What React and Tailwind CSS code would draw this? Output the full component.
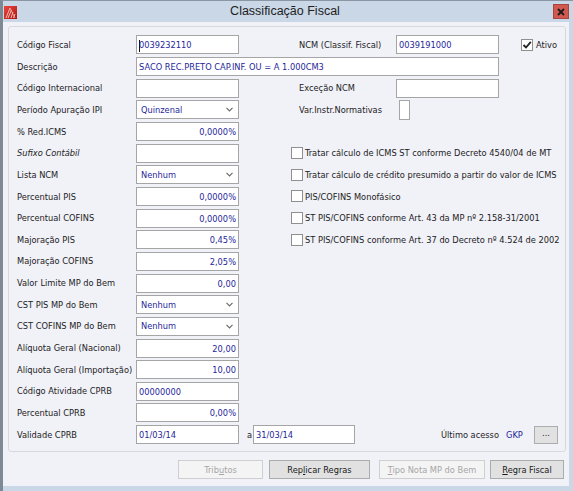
import React from 'react';

const FONT = { fontFamily: '"DejaVu Sans Condensed", "Liberation Sans", Arial, sans-serif', fontStretch: 'condensed' };

function Row({ children }) {
  return <div className="flex h-[21.67px] shrink-0 items-center">{children}</div>;
}

function Label({ children, italic }) {
  return (
    <div className={`w-[119px] shrink-0 whitespace-nowrap text-[#222] ${italic ? 'italic' : ''}`}>
      {children}
    </div>
  );
}

function Box({ children, right, w = 'w-[103px]', className = '' }) {
  return (
    <div
      className={`h-[19px] shrink-0 overflow-hidden whitespace-nowrap border border-[#a5a5a5] bg-white px-[2px] leading-[17px] text-[#1f1f9a] ${w} ${right ? 'text-right' : ''} ${className}`}
    >
      {children}
    </div>
  );
}

function Select({ value }) {
  return (
    <div className="flex h-[19px] w-[103px] shrink-0 items-center justify-between border border-[#a5a5a5] bg-white pl-[4px] pr-[5px] text-[#1f1f9a]">
      <span>{value}</span>
      <svg width="7" height="5" viewBox="0 0 7 5">
        <path d="M0.5 0.8 L3.5 3.8 L6.5 0.8" fill="none" stroke="#6b6b6b" strokeWidth="1.2" />
      </svg>
    </div>
  );
}

function Check({ checked }) {
  return (
    <div className="flex h-[12px] w-[12px] shrink-0 items-center justify-center border border-[#8f8f8f] bg-white">
      {checked && (
        <svg width="10" height="10" viewBox="0 0 10 10">
          <path d="M1.5 5 L4 7.5 L8.8 1.8" fill="none" stroke="#222" strokeWidth="1.8" />
        </svg>
      )}
    </div>
  );
}

function CheckRow({ children }) {
  return (
    <div className="ml-[52px] flex items-center gap-[2px] whitespace-nowrap text-[#222]">
      <Check />
      <span>{children}</span>
    </div>
  );
}

function Button({ children, disabled, w }) {
  return (
    <div
      className={`flex h-[19px] shrink-0 items-center justify-center border ${w} ${
        disabled ? 'border-[#cfcfcf] bg-[#f4f4f4] text-[#a6a6a6]' : 'border-[#acacac] bg-[#e1e1e1] text-[#1a1a1a]'
      }`}
    >
      {children}
    </div>
  );
}

function AppIcon() {
  return (
    <svg width="13" height="13" viewBox="0 0 13 13">
      <defs>
        <linearGradient id="rg" x1="0" y1="0" x2="1" y2="1">
          <stop offset="0" stopColor="#e8473f" />
          <stop offset="1" stopColor="#b01812" />
        </linearGradient>
      </defs>
      <rect x="0" y="0" width="13" height="13" fill="url(#rg)" />
      <path d="M2 12 L6 2 M4 12 L7.5 4 M7 12 L9 6 M9.5 12 L11 8" stroke="#f7c9c4" strokeWidth="0.9" fill="none" />
      <path d="M6 2 L11 12" stroke="#f3b0a9" strokeWidth="0.8" fill="none" />
    </svg>
  );
}

export default function App() {
  return (
    <div
      className="flex h-[491px] w-[573px] flex-col overflow-hidden border-l-[3px] border-t border-l-[#7e8996] border-t-[#8a96a3] bg-[#c9d7e7] text-[9.2px]"
      style={FONT}
    >
      {/* Title bar */}
      <div className="relative flex h-[21px] shrink-0 items-center">
        <div className="ml-[1px] mt-[2px]">
          <AppIcon />
        </div>
        <div className="flex-1 text-center text-[12.5px] text-[#1e1e1e]" style={{ fontFamily: '"Liberation Sans", Arial, sans-serif' }}>
          Classificação Fiscal
        </div>
        <div className="mr-[4px] flex h-[15px] w-[16px] items-center justify-center border border-[#a8473f] bg-[#d2594f]">
          <svg width="8" height="8" viewBox="0 0 8 8">
            <path d="M1 1 L7 7 M7 1 L1 7" stroke="#1c1c1c" strokeWidth="1.8" />
          </svg>
        </div>
      </div>

      {/* Body */}
      <div className="mr-[4px] flex flex-1 flex-col bg-[#f1f1f8] pl-[5px] pr-[3px] pt-[4px]">
        <div className="flex h-[426px] flex-col rounded-[3px] border border-[#d8d8e0] pl-[8px] pr-[7px] pt-[7px]">
          <Row>
            <Label>Código Fiscal</Label>
            <Box>
              <span className="mr-[-1px] inline-block h-[12px] w-[1px] bg-[#111] align-middle" />
              0039232110
            </Box>
            <div className="ml-[60px] w-[97px] shrink-0 text-[#222]">NCM (Classif. Fiscal)</div>
            <Box>0039191000</Box>
            <div className="ml-[22px] flex items-center gap-[3px] text-[#222]">
              <Check checked />
              <span>Ativo</span>
            </div>
          </Row>
          <Row>
            <Label>Descrição</Label>
            <Box w="w-[363px]">SACO REC.PRETO CAP.INF. OU = A 1.000CM3</Box>
          </Row>
          <Row>
            <Label>Código Internacional</Label>
            <Box />
            <div className="ml-[60px] w-[97px] shrink-0 text-[#222]">Exceção NCM</div>
            <Box />
          </Row>
          <Row>
            <Label>Período Apuração IPI</Label>
            <Select value="Quinzenal" />
            <div className="ml-[60px] w-[100px] shrink-0 text-[#222]">Var.Instr.Normativas</div>
            <div className="h-[20px] w-[11px] border border-[#a5a5a5] bg-white" />
          </Row>
          <Row>
            <Label>% Red.ICMS</Label>
            <Box right>0,0000%</Box>
          </Row>
          <Row>
            <Label italic>Sufixo Contábil</Label>
            <Box />
            <CheckRow>Tratar cálculo de ICMS ST conforme Decreto 4540/04 de MT</CheckRow>
          </Row>
          <Row>
            <Label>Lista NCM</Label>
            <Select value="Nenhum" />
            <CheckRow>Tratar cálculo de crédito presumido a partir do valor de ICMS</CheckRow>
          </Row>
          <Row>
            <Label>Percentual PIS</Label>
            <Box right>0,0000%</Box>
            <CheckRow>PIS/COFINS Monofásico</CheckRow>
          </Row>
          <Row>
            <Label>Percentual COFINS</Label>
            <Box right>0,0000%</Box>
            <CheckRow>ST PIS/COFINS conforme Art. 43 da MP nº 2.158-31/2001</CheckRow>
          </Row>
          <Row>
            <Label>Majoração PIS</Label>
            <Box right>0,45%</Box>
            <CheckRow>ST PIS/COFINS conforme Art. 37 do Decreto nº 4.524 de 2002</CheckRow>
          </Row>
          <Row>
            <Label>Majoração COFINS</Label>
            <Box right>2,05%</Box>
          </Row>
          <Row>
            <Label>Valor Limite MP do Bem</Label>
            <Box right>0,00</Box>
          </Row>
          <Row>
            <Label>CST PIS MP do Bem</Label>
            <Select value="Nenhum" />
          </Row>
          <Row>
            <Label>CST COFINS MP do Bem</Label>
            <Select value="Nenhum" />
          </Row>
          <Row>
            <Label>Alíquota Geral (Nacional)</Label>
            <Box right>20,00</Box>
          </Row>
          <Row>
            <Label>Alíquota Geral (Importação)</Label>
            <Box right>10,00</Box>
          </Row>
          <Row>
            <Label>Código Atividade CPRB</Label>
            <Box>00000000</Box>
          </Row>
          <Row>
            <Label>Percentual CPRB</Label>
            <Box right>0,00%</Box>
          </Row>
          <Row>
            <Label>Validade CPRB</Label>
            <Box>01/03/14</Box>
            <span className="w-[14px] shrink-0 pl-[8px] text-[#222]">a</span>
            <Box w="w-[102px]">31/03/14</Box>
            <span className="ml-[86px] text-[#222]">Último acesso</span>
            <span className="ml-[7px] text-[#1f1f9a]">GKP</span>
            <div className="ml-auto flex h-[18px] w-[24px] items-start justify-center border border-[#adadad] bg-[#e1e1e1] leading-[12px] text-[#222]">
              ...
            </div>
          </Row>
        </div>

        {/* Buttons */}
        <div className="mt-[8px] flex pl-[170px]">
          <Button disabled w="w-[85px]">
            <span>
              Trib<span className="underline">u</span>tos
            </span>
          </Button>
          <div className="w-[6px]" />
          <Button w="w-[101px]">
            <span>
              Rep<span className="underline">l</span>icar Regras
            </span>
          </Button>
          <div className="w-[9px]" />
          <Button disabled w="w-[106px]">
            <span>
              <span className="underline">T</span>ipo Nota MP do Bem
            </span>
          </Button>
          <div className="w-[5px]" />
          <Button w="w-[74px]">
            <span>
              <span className="underline">R</span>egra Fiscal
            </span>
          </Button>
        </div>
      </div>
      <div className="h-[5px] shrink-0" />
    </div>
  );
}
